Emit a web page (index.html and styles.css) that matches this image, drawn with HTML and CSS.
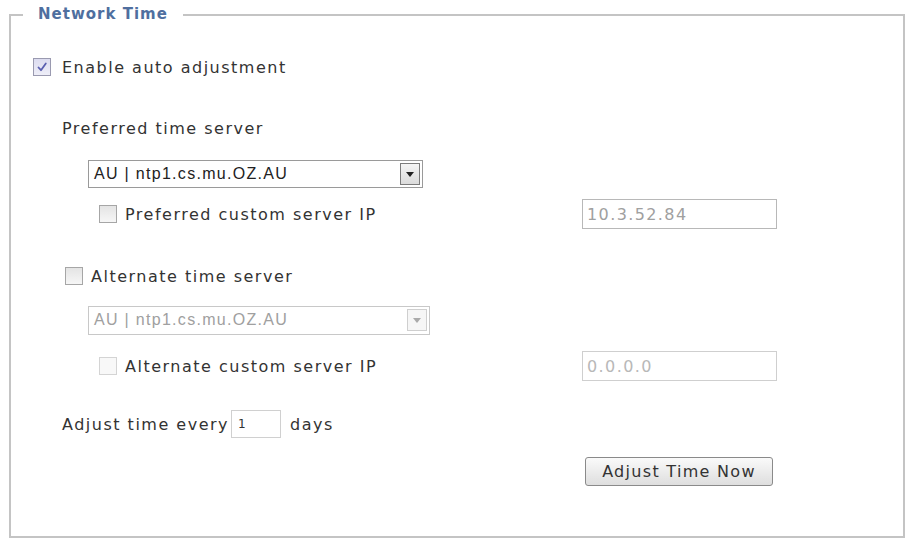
FILE: index.html
```html
<!DOCTYPE html>
<html>
<head>
<meta charset="utf-8">
<link rel="stylesheet" href="styles.css">
</head>
<body>
<fieldset class="panel">
  <legend class="panel-title">Network Time</legend>

  <div class="row row-enable">
    <span class="cb checked"><svg viewBox="0 0 12 12" width="12" height="12"><path d="M2.5 6.5 L5 9.2 L9.8 2.5" fill="none" stroke="#5a5fb0" stroke-width="1.8" stroke-linecap="round" stroke-linejoin="round"/></svg></span>
    <span class="label">Enable auto adjustment</span>
  </div>

  <div class="row row-pref-label">
    <span class="label">Preferred time server</span>
  </div>

  <div class="row row-pref-select">
    <div class="select">
      <span class="select-text">AU | ntp1.cs.mu.OZ.AU</span>
      <span class="select-btn"><svg viewBox="0 0 8 5" width="8" height="5"><path d="M0 0 H8 L4 5 Z" fill="#222"/></svg></span>
    </div>
  </div>

  <div class="row row-pref-ip">
    <span class="cb"></span>
    <span class="label">Preferred custom server IP</span>
    <span class="textbox">10.3.52.84</span>
  </div>

  <div class="row row-alt">
    <span class="cb"></span>
    <span class="label">Alternate time server</span>
  </div>

  <div class="row row-alt-select">
    <div class="select disabled">
      <span class="select-text">AU | ntp1.cs.mu.OZ.AU</span>
      <span class="select-btn"><svg viewBox="0 0 8 5" width="8" height="5"><path d="M0 0 H8 L4 5 Z" fill="#aaa"/></svg></span>
    </div>
  </div>

  <div class="row row-alt-ip">
    <span class="cb disabled"></span>
    <span class="label">Alternate custom server IP</span>
    <span class="textbox disabled">0.0.0.0</span>
  </div>

  <div class="row row-every">
    <span class="label">Adjust time every</span>
    <span class="smallbox">1</span>
    <span class="label">days</span>
  </div>

  <div class="row row-btn">
    <button class="btn">Adjust Time Now</button>
  </div>
</fieldset>
</body>
</html>
```

FILE: styles.css
```css
html, body {
  margin: 0;
  background: #fff;
}
body {
  padding: 6px 2px 4px 9px;
  font-family: "DejaVu Sans", Verdana, sans-serif;
  color: #333;
}
.panel {
  margin: 0;
  width: 896px;
  height: 532px;
  box-sizing: border-box;
  border: 2px solid #c4c4c4;
  padding: 29px 0 0 22px;
}
.panel-title {
  margin-left: -10px;
  padding: 0 15px;
  font-size: 15px;
  font-weight: bold;
  color: #4f6f9f;
  letter-spacing: 1px;
  line-height: 17px;
}
.row {
  display: flex;
  align-items: center;
  height: 30px;
}
.label {
  font-size: 16px;
  letter-spacing: 1.5px;
  color: #333;
  white-space: nowrap;
}
.cb {
  width: 16px;
  height: 16px;
  border: 1px solid #a6a6a6;
  background: linear-gradient(#e4e4e4, #f6f6f6);
  display: inline-flex;
  align-items: center;
  justify-content: center;
  flex: none;
  margin-right: 8px;
}
.row-enable .cb { margin-right: 11px; }
.cb.checked {
  background: linear-gradient(#dcdcf0, #eeeef8);
  border-color: #9a9ab0;
}
.cb.disabled {
  border-color: #d4d4d4;
  background: #f8f8f8;
}
.row-pref-label { margin-top: 31px; padding-left: 29px; }
.row-pref-select { margin-top: 16px; padding-left: 55px; }
.row-pref-ip { margin-top: 10px; padding-left: 66px; }
.row-alt { margin-top: 32px; padding-left: 32px; }
.row-alt-select { margin-top: 14px; padding-left: 55px; }
.row-alt-ip { margin-top: 16px; padding-left: 66px; }
.row-every { margin-top: 28px; padding-left: 29px; }
.row-btn { margin-top: 17px; padding-left: 552px; }
.select {
  width: 335px;
  height: 28px;
  box-sizing: border-box;
  border: 1px solid #9a9a9a;
  display: flex;
  align-items: center;
  justify-content: space-between;
  padding: 0 2px 0 5px;
  background: #fff;
}
.select.disabled {
  width: 342px;
  height: 29px;
  border-color: #c8c8c8;
}
.select-text {
  font-family: "Liberation Sans", Arial, sans-serif;
  font-size: 16px;
  letter-spacing: 1.3px;
  color: #222;
}
.select.disabled .select-text { color: #a0a0a0; }
.select-btn {
  width: 20px;
  height: 22px;
  box-sizing: border-box;
  border: 1px solid #7c7c7c;
  background: linear-gradient(#f4f4f4, #dcdcdc);
  display: flex;
  align-items: center;
  justify-content: center;
}
.select.disabled .select-btn {
  border-color: #cfcfcf;
  background: #f6f6f6;
}
.textbox {
  margin-left: auto;
  margin-right: 126px;
  width: 195px;
  height: 30px;
  box-sizing: border-box;
  border: 1px solid #b8b8b8;
  display: flex;
  align-items: center;
  padding-left: 4px;
  font-size: 16px;
  letter-spacing: 1.4px;
  color: #a0a0a0;
}
.textbox.disabled { border-color: #cfcfcf; color: #b8b8b8; }
.smallbox {
  width: 50px;
  height: 28px;
  box-sizing: border-box;
  border: 1px solid #d0d0d0;
  margin: 0 9px 0 2px;
  display: flex;
  align-items: center;
  padding-left: 6px;
  font-size: 12px;
  color: #333;
}
.btn {
  width: 188px;
  height: 29px;
  border: 1px solid #8a8a8a;
  border-radius: 3px;
  background: linear-gradient(#fafafa, #dedede);
  font-family: "DejaVu Sans", Verdana, sans-serif;
  font-size: 16px;
  letter-spacing: 1.3px;
  color: #333;
  padding: 0;
}
```
